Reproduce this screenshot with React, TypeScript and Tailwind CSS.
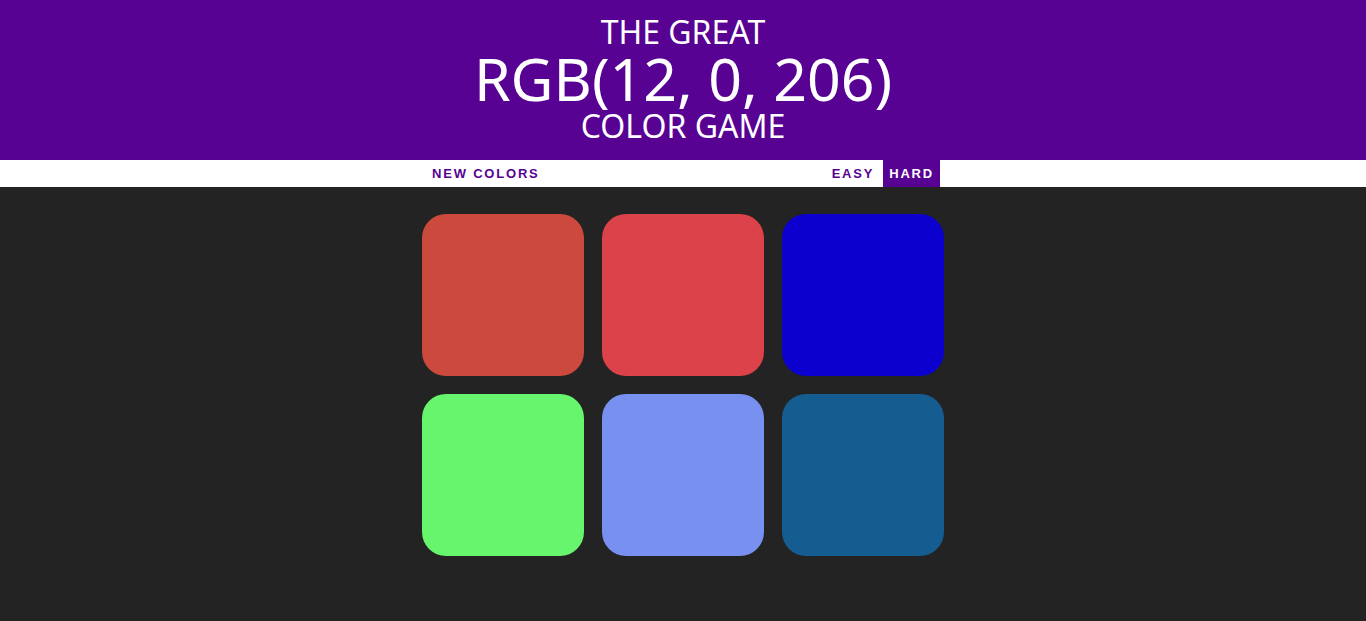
import React from 'react'

const colors = ['#cb4a3d', '#dc424a', '#0c00ce', '#66f56d', '#7891f0', '#155c91']

export default function App() {
  return (
    <div className="min-h-[621px] bg-[#232323] font-['Noto_Sans',sans-serif]">
      <h1 className="bg-[#570293] text-white text-center uppercase font-normal pt-[16px] h-[160px]">
        <span className="block text-[32px] leading-[32px]">The Great</span>
        <span className="block text-[59px] leading-[60px]">RGB(12, 0, 206)</span>
        <span className="block text-[32px] leading-[35px]">Color Game</span>
      </h1>
      <div className="bg-white h-[27px]">
        <div className="w-[540px] mx-auto flex items-stretch h-full font-['Liberation_Sans',sans-serif] text-[13px] font-bold tracking-[1.8px] text-[#570293]">
          <button className="pl-[19px] pr-3 uppercase">New Colors</button>
          <span className="flex-1"></span>
          <button className="pl-2 pr-[9px] uppercase">Easy</button>
          <button className="px-[6px] uppercase bg-[#570293] text-white mr-[13px]">Hard</button>
        </div>
      </div>
      <div className="w-[540px] mx-auto pt-[27px] grid grid-cols-3 gap-[18px] px-[9px]">
        {colors.map((c) => (
          <div key={c} className="h-[162px] rounded-[24px]" style={{ backgroundColor: c }} />
        ))}
      </div>
    </div>
  )
}
